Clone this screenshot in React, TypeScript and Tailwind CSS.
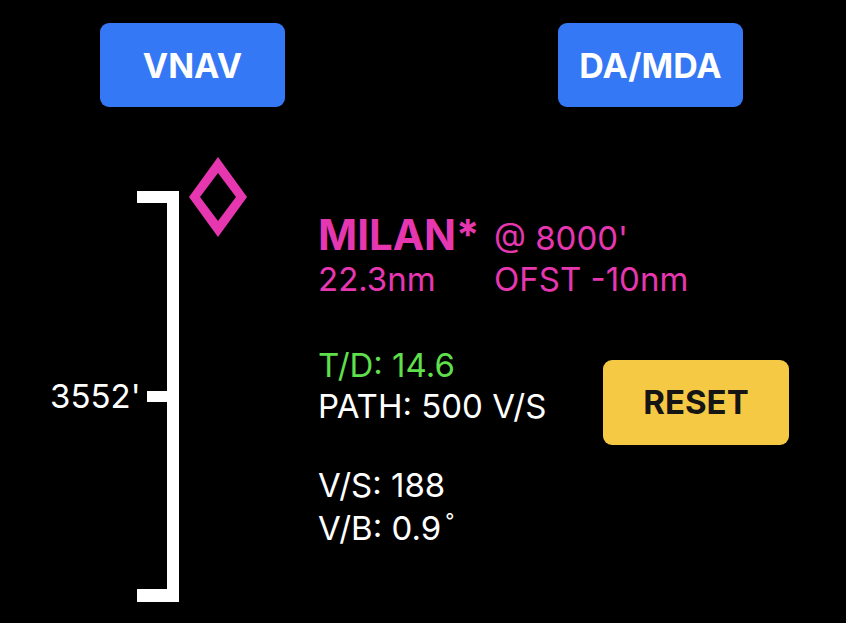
import React from "react";

const font = { fontFamily: "Inter, 'Liberation Sans', sans-serif" };

function TopButton({ label }: { label: string }) {
  return (
    <button className="flex h-[84px] w-[185px] items-center justify-center rounded-[9px] bg-[#3478f6] text-[34px] font-bold text-white">
      {label}
    </button>
  );
}

function Gauge() {
  return (
    <div className="relative ml-[50px] mt-[84px] flex items-center">
      <span className="-mr-[3px] w-[90px] text-right text-[33px] leading-none text-white">
        3552'
      </span>
      <svg width="42" height="411" viewBox="0 0 42 411" className="block">
        <rect x="0" y="0" width="42" height="12" fill="#fff" />
        <rect x="30" y="0" width="12" height="411" fill="#fff" />
        <rect x="0" y="398" width="42" height="13" fill="#fff" />
        <rect x="10" y="200" width="20" height="11" fill="#fff" />
      </svg>
      {/* path marker */}
      <svg
        width="58"
        height="80"
        viewBox="0 0 58 80"
        className="absolute left-[139px] top-[-34px]"
      >
        <path
          d="M29 0 L58 40 L29 80 L0 40 Z M29 16 L11 40 L29 64 L47 40 Z"
          fill="#e637b1"
          fillRule="evenodd"
        />
      </svg>
    </div>
  );
}

export default function App() {
  return (
    <div className="h-[623px] w-[846px] overflow-hidden bg-black" style={font}>
      <div className="flex gap-[273px] pl-[100px] pt-[23px]">
        <TopButton label="VNAV" />
        <TopButton label="DA/MDA" />
      </div>

      <div className="flex">
        <Gauge />

        <div className="ml-[139px] mr-[57px] mt-[107px] flex-1 text-[33px] leading-[41px]">
          <div className="grid grid-cols-[176px_auto] items-baseline text-[#e637b1]">
            <span className="text-[42px] font-bold">MILAN*</span>
            <span>@ 8000'</span>
            <span>22.3nm</span>
            <span>OFST -10nm</span>
          </div>

          <div className="mt-[45px] flex items-start justify-between">
            <div>
              <div className="text-[#5fdf4c]">T/D: 14.6</div>
              <div className="text-white">PATH: 500 V/S</div>
            </div>
            <button className="mt-[15px] flex h-[85px] w-[186px] items-center justify-center rounded-[9px] bg-[#f5c943] text-[33px] font-bold text-[#151515]">
              RESET
            </button>
          </div>

          <div className="mt-[20px] text-white">
            <div>V/S: 188</div>
            <div className="mt-[2px]">
              V/B: 0.9<span className="relative top-[-12px] ml-[4px] text-[20px]">°</span>
            </div>
          </div>
        </div>
      </div>
    </div>
  );
}
